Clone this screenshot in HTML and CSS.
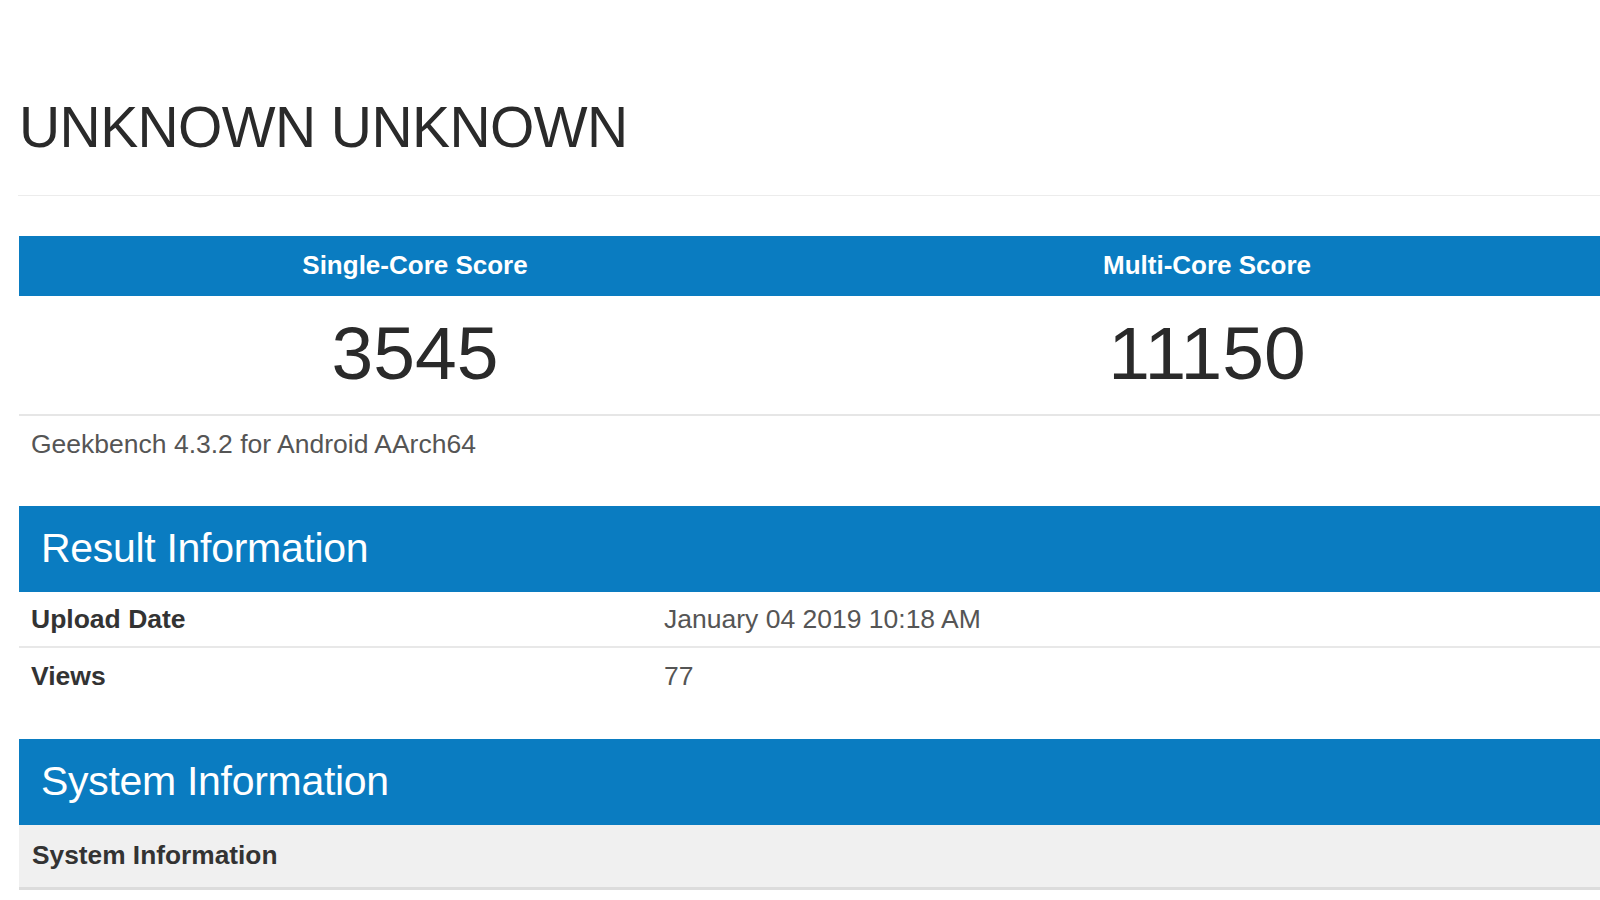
FILE: index.html
```html
<!DOCTYPE html>
<html>
<head>
<meta charset="utf-8">
<link rel="stylesheet" href="styles.css">
</head>
<body>
<div class="page">
  <h1 class="title">UNKNOWN UNKNOWN</h1>
  <div class="rule"></div>
  <div class="scores">
    <div class="score-col">
      <div class="score-head">Single-Core Score</div>
      <div class="score-val">3545</div>
    </div>
    <div class="score-col">
      <div class="score-head">Multi-Core Score</div>
      <div class="score-val">11150</div>
    </div>
  </div>
  <div class="version">Geekbench 4.3.2 for Android AArch64</div>

  <div class="section-head">Result Information</div>
  <div class="row"><div class="label">Upload Date</div><div class="value">January 04 2019 10:18 AM</div></div>
  <div class="row last"><div class="label">Views</div><div class="value">77</div></div>

  <div class="section-head sys">System Information</div>
  <div class="subhead">System Information</div>
</div>
</body>
</html>
```
FILE: styles.css
```css
html, body {
  margin: 0;
  padding: 0;
  background: #ffffff;
  overflow: hidden;
  width: 1600px;
  height: 900px;
}
.page {
  margin-left: 19px;
  width: 1584px;
  font-family: "Liberation Sans", Arial, sans-serif;
  color: #333;
}
.title {
  margin: 0;
  padding-top: 94px;
  font-size: 57px;
  line-height: 66px;
  font-weight: normal;
  color: #2a2a2a;
  letter-spacing: -0.6px;
  margin-bottom: 35px;
}
.rule {
  margin-left: -1px;
  height: 1px;
  background: #ececec;
  margin-bottom: 40px;
}
.scores {
  display: grid;
  grid-template-columns: 1fr 1fr;
  border-bottom: 2px solid #e6e6e6;
}
.score-head {
  background: #0a7cc1;
  color: #ffffff;
  height: 60px;
  line-height: 58px;
  text-align: center;
  font-weight: bold;
  font-size: 26px;
}
.score-val {
  height: 118px;
  text-align: center;
  font-size: 75px;
  line-height: 114px;
  color: #2a2a2a;
}
.version {
  height: 90px;
  padding-left: 12px;
  font-size: 26.5px;
  line-height: 56px;
  color: #555;
}
.section-head {
  background: #0a7cc1;
  color: #ffffff;
  height: 86px;
  line-height: 84px;
  padding-left: 22px;
  font-size: 41px;
  letter-spacing: -0.3px;
}
.row {
  display: flex;
  height: 54px;
  align-items: center;
  border-bottom: 2px solid #e8e8e8;
  font-size: 26.5px;
}
.row.last {
  border-bottom: none;
  height: 56px;
  margin-bottom: 35px;
}
.label {
  width: 633px;
  padding-left: 12px;
  font-weight: bold;
  color: #333;
}
.value {
  color: #555;
}
.subhead {
  background: #f0f0f0;
  height: 62px;
  line-height: 60px;
  padding-left: 13px;
  font-weight: bold;
  font-size: 26.3px;
  color: #333;
  border-bottom: 3px solid #dcdcdc;
}
```
